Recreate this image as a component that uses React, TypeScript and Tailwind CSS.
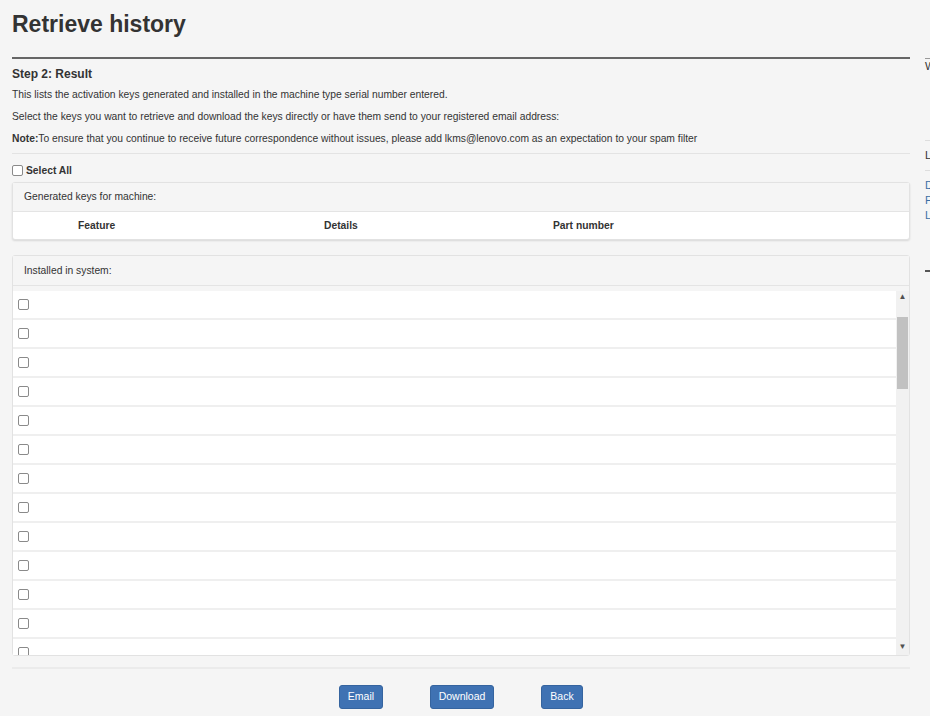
import React from "react";

const rows = Array.from({ length: 13 });

function Box() {
  return <span className="block w-[11px] h-[11px] border border-[#8a8a8a] rounded-[2px] bg-white" />;
}

export default function App() {
  return (
    <div className="w-[930px] h-[716px] overflow-hidden bg-[#f5f5f5] text-[#333] font-['Liberation_Sans',Arial,sans-serif]">
      <div className="flex">
        <div className="w-[898px] ml-[12px] shrink-0">
          <h1 className="text-[23px] font-bold leading-[28px] pt-[10px] text-[#333]">Retrieve history</h1>
          <div className="mt-[19px] border-t-2 border-[#666]" />
          <h2 className="mt-[7px] text-[12px] font-bold leading-[16px]">Step 2: Result</h2>
          <p className="mt-[6px] text-[10.3px] leading-[13px]">This lists the activation keys generated and installed in the machine type serial number entered.</p>
          <p className="mt-[9px] text-[10.3px] leading-[13px]">Select the keys you want to retrieve and download the keys directly or have them send to your registered email address:</p>
          <p className="mt-[9px] text-[10.3px] leading-[13px]"><b>Note:</b>To ensure that you continue to receive future correspondence without issues, please add lkms@lenovo.com as an expectation to your spam filter</p>
          <div className="mt-[8px] border-t border-[#e3e3e3]" />
          <div className="mt-[10px] flex items-center gap-[3px] text-[10.3px] font-bold leading-[13px]">
            <Box />
            <span>Select All</span>
          </div>
          <div className="mt-[5px] border border-[#e2e2e2] rounded-[3px] shadow-[0_1px_2px_rgba(0,0,0,0.12)] bg-white">
            <div className="h-[29px] bg-[#f5f5f5] border-b border-[#e4e4e4] flex items-center px-[11px] text-[10.3px]">Generated keys for machine:</div>
            <div className="h-[27px] flex items-center text-[10.3px] font-bold">
              <span className="ml-[65px] w-[246px]">Feature</span>
              <span className="w-[229px]">Details</span>
              <span>Part number</span>
            </div>
          </div>
          <div className="mt-[15px] border border-[#e2e2e2] rounded-[3px] bg-[#f5f5f5]">
            <div className="h-[30px] bg-[#f5f5f5] border-b border-[#e4e4e4] flex items-center px-[11px] text-[10.3px]">Installed in system:</div>
            <div className="h-[5px]" />
            <div className="flex h-[364px] overflow-hidden">
              <div className="flex-1 flex flex-col bg-white">
                {rows.map((_, i) => (
                  <div key={i} className="h-[29px] shrink-0 border-b-2 border-[#efefef] flex items-center pl-[5px]">
                    <Box />
                  </div>
                ))}
              </div>
              <div className="w-[13px] bg-[#f1f1f1] flex flex-col items-center">
                <div className="h-[10px] flex items-center justify-center text-[8px] leading-none text-[#505050] mt-[1px]">▲</div>
                <div className="mt-[15px] w-[11px] h-[72px] bg-[#c1c1c1]" />
                <div className="flex-1" />
                <div className="h-[10px] flex items-center justify-center text-[8px] leading-none text-[#505050] mb-[3px]">▼</div>
              </div>
            </div>
          </div>
          <div className="mt-[11px] border-t-2 border-[#ebebeb]" />
          <div className="mt-[16px] flex justify-center gap-[47px]">
            <button className="h-[24px] w-[44px] rounded-[3px] bg-[#3f72b3] border border-[#35649f] text-white text-[10.5px]">Email</button>
            <button className="h-[24px] w-[64px] rounded-[3px] bg-[#3f72b3] border border-[#35649f] text-white text-[10.5px]">Download</button>
            <button className="h-[24px] w-[42px] rounded-[3px] bg-[#3f72b3] border border-[#35649f] text-white text-[10.5px]">Back</button>
          </div>
        </div>
        <div className="ml-[15px] w-[60px] shrink-0 pt-[58px] text-[11px]">
          <div className="border-t border-[#999] w-[5px]" />
          <div className="mt-[1px] leading-[13px]">W</div>
          <div className="mt-[67px] border-t border-[#ddd]" />
          <div className="mt-[8px] leading-[13px]">L</div>
          <div className="mt-[8px] border-t border-[#ddd]" />
          <div className="mt-[7px] leading-[15px] text-[#3a6ea5]">
            <div>D</div>
            <div>F</div>
            <div>L</div>
          </div>
          <div className="mt-[47px] border-t-2 border-[#555] w-[5px]" />
        </div>
      </div>
    </div>
  );
}
